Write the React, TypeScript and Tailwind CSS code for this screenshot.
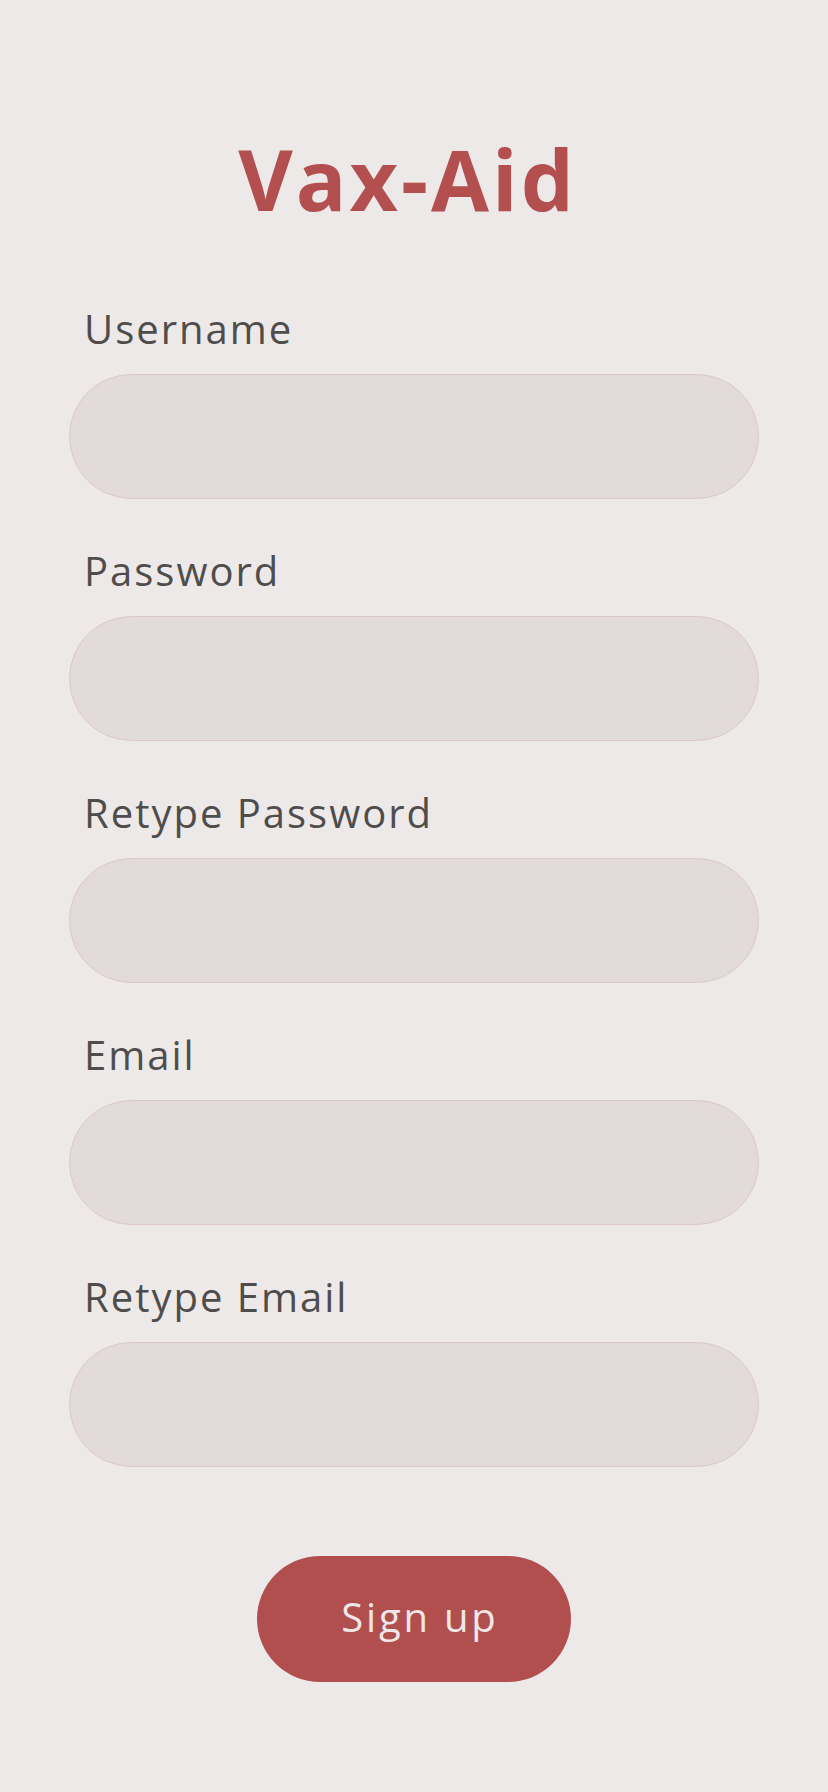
import React from "react";

const fields = ["Username", "Password", "Retype Password", "Email", "Retype Email"];

export default function App() {
  return (
    <div
      className="min-h-[1792px] w-full bg-[#ede9e8] pt-[137px]"
      style={{ fontFamily: '"Open Sans", "DejaVu Sans", sans-serif' }}
    >
      <h1 className="pr-[13px] text-center text-[84px] font-bold leading-none tracking-[3px] text-[#b34f4f]">
        Vax-Aid
      </h1>
      <div className="mt-[88px] flex flex-col gap-[52px] px-[69px]">
        {fields.map((f) => (
          <div key={f} className="flex flex-col gap-[25px]">
            <label className="pl-[15px] text-[40px] leading-none tracking-[2px] text-[#4f4d4b]">
              {f}
            </label>
            <input
              type={f.toLowerCase().includes("password") ? "password" : "text"}
              className="h-[125px] w-full rounded-full border border-[#dcc8c8] bg-[#e3dada] outline-none"
            />
          </div>
        ))}
      </div>
      <div className="mt-[89px] flex justify-center">
        <button className="h-[126px] w-[314px] rounded-full bg-[#b04f4e] pb-[4px] pl-[12px] text-[40px] leading-none tracking-[2.8px] text-[#efe7e7]">
          Sign up
        </button>
      </div>
    </div>
  );
}
